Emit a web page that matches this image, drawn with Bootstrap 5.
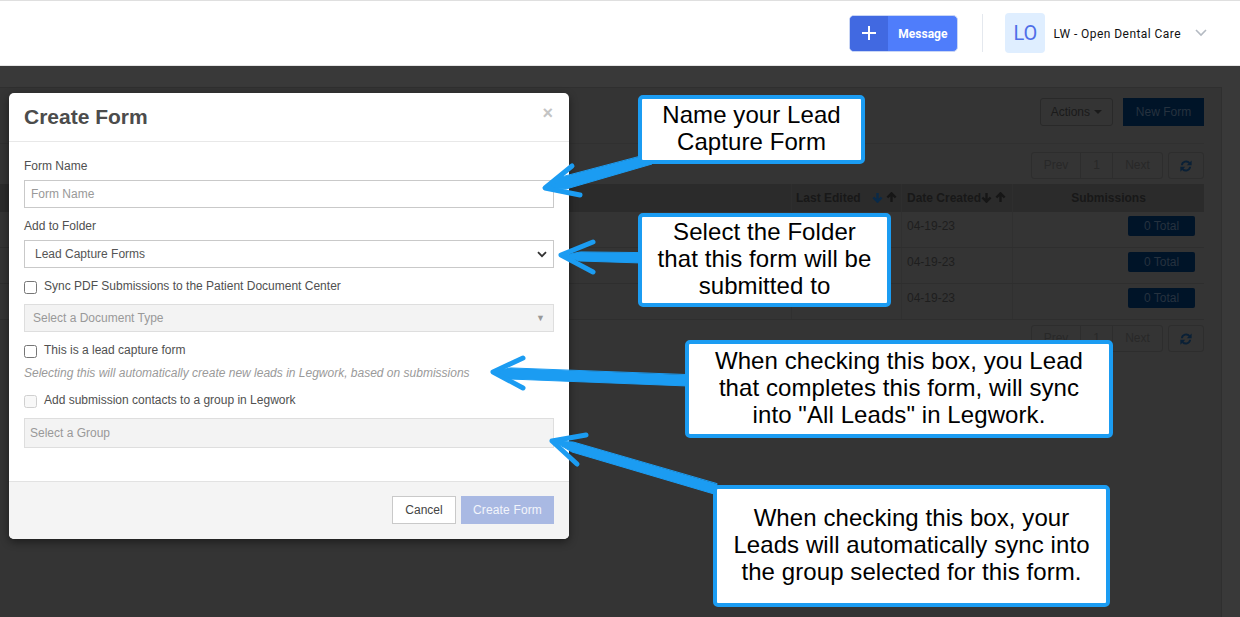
<!DOCTYPE html>
<html lang="en">
<head>
<meta charset="UTF-8">
<title>Create Form</title>
<link rel="stylesheet" href="https://cdn.jsdelivr.net/npm/bootstrap@5.3.2/dist/css/bootstrap.min.css">
<style>
html, body { height: 617px; overflow: hidden; }
body { background: #393939; font-family: "Liberation Sans", Arial, sans-serif; color: #444; position: relative; }
.topbar { height: 66px; background: #fff; border-top: 1px solid #dfdfdf; border-bottom: 1px solid #e6e6e6; padding-right: 33px; }
.msg-btn { height: 37px; width: 109px; margin-right: 24px; border-radius: 5px; overflow: hidden; background: #4f7dfb; border: 1px solid #c9d6f5; color: #fff; font: 700 12px Roboto, sans-serif; }
.msg-plus { width: 38px; background: #4169e1; }
.msg-label { flex: 1; padding-top: 1px; }
.topbar-sep { width: 1px; height: 38px; background: #e4e8ee; margin-right: 22px; }
.avatar { width: 40px; height: 40px; border-radius: 4px; background: #dfeeff; color: #4f6fe8; font: 400 20px Roboto, sans-serif; margin-right: 8px; }
.acct { font: 400 12px Roboto, sans-serif; color: #111; letter-spacing: .44px; margin-right: 14px; padding-top: 1px; }

.backdrop-page { padding: 21px 18px 0 0; height: 551px; }
.bg-panel { height: 530px; background: #343434; border: 1px solid #2f2f2f; border-left: 0; border-bottom: 0; padding: 10px 17px 0 0; font-size: 12px; color: #1e1e1e; }
.bg-head { height: 46px; border-bottom: 1px solid #303030; }
.bg-btn { height: 28px; border: 1px solid #292929; border-radius: 3px; padding: 0 10px; color: #1a1a1a; font-size: 12px; }
.bg-caret { width: 0; height: 0; margin-left: 4px; border-left: 4px solid transparent; border-right: 4px solid transparent; border-top: 4px solid #1a1a1a; }
.bg-navy-btn { height: 28px; width: 81px; margin-left: 10px; background: #001428; color: #26323f; font-size: 12px; }
.pager-row { height: 27px; margin: 8px 0 5px; }
.pager-low { margin-top: 5px; }
.bg-pager { height: 27px; border: 1px solid #2d2d2d; border-radius: 3px; color: #282828; margin-right: 5px; }
.bg-pager > span { line-height: 25px; border-left: 1px solid #2d2d2d; text-align: center; }
.bg-pager > span:first-child { border-left: 0; }
.pg-prev { width: 48px; }
.pg-one { width: 32px; }
.pg-next { width: 50px; }
.bg-refresh { width: 36px; height: 27px; border: 1px solid #2d2d2d; border-radius: 3px; }
.bg-thead { height: 28px; background: #2b2b2b; font-weight: 700; color: #181818; line-height: 28px; }
.bg-row { height: 36px; border-bottom: 1px solid #2e2e2e; }
.col-edited { width: 110px; margin-left: auto; padding-left: 4px; border-left: 1px solid #2e2e2e; }
.col-created { width: 111px; padding-left: 5px; border-left: 1px solid #2e2e2e; }
.col-subs { width: 192px; border-left: 1px solid #2e2e2e; }
.bg-row .col-edited, .bg-row .col-created, .bg-row .col-subs { border-left-color: #303030; }
.bg-row .col-created { padding-top: 5px; }
.total-pill { width: 67px; height: 20px; margin: 4px 9px 0 auto; background: #001428; border-radius: 2px; color: #26323f; text-align: center; line-height: 20px; }
.sort-ico { vertical-align: -1px; }

.modal-box { position: absolute; left: 9px; top: 93px; width: 560px; height: 446px; background: #fff; border-radius: 5px; box-shadow: 0 3px 8px rgba(0,0,0,.45); overflow: hidden; font-size: 12px; }
.modal-top { height: 49px; border-bottom: 1px solid #e8e8e8; padding: 0 15px; }
.modal-top h2 { font: 700 21px "Liberation Sans", Arial, sans-serif; color: #4c4c4c; margin: 0; }
.modal-x { color: #c4c4c4; font-size: 18px; font-weight: 700; line-height: 1; margin-bottom: 8px; margin-right: 1px; }
.modal-main { padding: 17px 15px 0; height: 339px; }
.fld-label { display: block; line-height: 14px; color: #505050; margin-bottom: 7px; }
.fld-box { height: 28px; border: 1px solid #c9c9c9; margin-bottom: 11px; padding: 0 6px; line-height: 26px; color: #999; }
.fld-select { padding: 0 6px 0 10px; color: #555; }
.fld-off { background: #f3f3f3; border-color: #dedede; color: #999; }
.fld-doc { padding: 0 8px; margin-bottom: 11px; }
.fld-group { height: 30px; line-height: 28px; padding: 0 5px; }
.doc-caret { font-size: 9px; }
.chk-row { line-height: 14px; color: #505050; gap: 7px; margin-bottom: 10px; }
.chk-tight { margin-bottom: 8px; }
.chk-last { margin-top: 13px; margin-bottom: 10px; }
.fake-chk { width: 13px; height: 13px; border: 1px solid #767676; border-radius: 2.5px; background: #fff; margin-top: 2px; flex: none; }
.fake-chk-off { border-color: #d0d0d0; background: #f8f8f8; }
.hint { font-style: italic; color: #9a9a9a; line-height: 14px; }
.modal-bottom { height: 58px; background: #f4f4f4; border-top: 1px solid #e2e2e2; padding: 0 15px 1px; gap: 5px; }
.foot-cancel { width: 64px; height: 28px; background: #fff; border: 1px solid #c9c9c9; color: #444; line-height: 26px; text-align: center; }
.foot-create { width: 93px; height: 28px; background: #a9b9e3; color: #f3f5fb; line-height: 28px; letter-spacing: .15px; text-align: center; }

.note { position: absolute; background: #fff; border: 4px solid #1b9cf2; border-radius: 5px; color: #000; font-size: 24px; line-height: 27px; letter-spacing: .08px; text-align: center; display: flex; align-items: center; justify-content: center; padding-bottom: 4px; }
.arrows { position: absolute; left: 0; top: 0; }
</style>
</head>
<body>
<div class="topbar d-flex align-items-center justify-content-end">
  <div class="msg-btn d-flex">
    <div class="msg-plus d-flex align-items-center justify-content-center">
      <svg width="16" height="16" viewBox="0 0 16 16"><path d="M8 1v14M1 8h14" stroke="#fff" stroke-width="2"/></svg>
    </div>
    <div class="msg-label d-flex align-items-center justify-content-center">Message</div>
  </div>
  <div class="topbar-sep"></div>
  <div class="avatar d-flex align-items-center justify-content-center">LO</div>
  <div class="acct">LW - Open Dental Care</div>
  <svg width="12" height="8" viewBox="0 0 12 8"><path d="M1 1l5 5 5-5" fill="none" stroke="#b4bac2" stroke-width="1.6"/></svg>
</div>

<!-- page behind the dialog -->
<div class="backdrop-page">
  <div class="bg-panel">
    <div class="bg-head d-flex justify-content-end align-items-start">
      <div class="bg-btn d-flex align-items-center">Actions<span class="bg-caret"></span></div>
      <div class="bg-navy-btn d-flex align-items-center justify-content-center">New Form</div>
    </div>
    <div class="pager-row d-flex justify-content-end">
      <div class="bg-pager d-flex"><span class="pg-prev">Prev</span><span class="pg-one">1</span><span class="pg-next">Next</span></div>
      <div class="bg-refresh d-flex align-items-center justify-content-center">
        <svg width="12" height="12" viewBox="0 0 16 16" fill="#0a2036"><path d="M2.5 7A5.7 5.7 0 0 1 12.5 4" fill="none" stroke="#0a2036" stroke-width="2.6"/><path d="M15.5 .5v6.5H9zM.5 15.5V9H7z"/><path d="M13.5 9A5.7 5.7 0 0 1 3.5 12" fill="none" stroke="#0a2036" stroke-width="2.6"/></svg>
      </div>
    </div>
    <div class="bg-table">
      <div class="bg-thead d-flex">
        <div class="col-edited">Last Edited
          <svg class="sort-ico ms-2" width="11" height="11" viewBox="0 0 12 12" fill="none" stroke="#0a2a48" stroke-width="2.6"><path d="M6 1v9M1.5 6L6 10.5 10.5 6"/></svg>
          <svg class="sort-ico" width="11" height="11" viewBox="0 0 12 12" fill="none" stroke="#161616" stroke-width="2.6"><path d="M6 11V2M1.5 6L6 1.5 10.5 6"/></svg>
        </div>
        <div class="col-created">Date Created<svg class="sort-ico" width="11" height="11" viewBox="0 0 12 12" fill="none" stroke="#161616" stroke-width="2.6"><path d="M6 1v9M1.5 6L6 10.5 10.5 6"/></svg>
          <svg class="sort-ico" width="11" height="11" viewBox="0 0 12 12" fill="none" stroke="#161616" stroke-width="2.6"><path d="M6 11V2M1.5 6L6 1.5 10.5 6"/></svg>
        </div>
        <div class="col-subs text-center">Submissions</div>
      </div>
      <div class="bg-row d-flex"><div class="col-edited"></div><div class="col-created">04-19-23</div><div class="col-subs"><div class="total-pill">0 Total</div></div></div>
      <div class="bg-row d-flex"><div class="col-edited"></div><div class="col-created">04-19-23</div><div class="col-subs"><div class="total-pill">0 Total</div></div></div>
      <div class="bg-row d-flex"><div class="col-edited"></div><div class="col-created">04-19-23</div><div class="col-subs"><div class="total-pill">0 Total</div></div></div>
    </div>
    <div class="pager-row pager-low d-flex justify-content-end">
      <div class="bg-pager d-flex"><span class="pg-prev">Prev</span><span class="pg-one">1</span><span class="pg-next">Next</span></div>
      <div class="bg-refresh d-flex align-items-center justify-content-center">
        <svg width="12" height="12" viewBox="0 0 16 16" fill="#0a2036"><path d="M2.5 7A5.7 5.7 0 0 1 12.5 4" fill="none" stroke="#0a2036" stroke-width="2.6"/><path d="M15.5 .5v6.5H9zM.5 15.5V9H7z"/><path d="M13.5 9A5.7 5.7 0 0 1 3.5 12" fill="none" stroke="#0a2036" stroke-width="2.6"/></svg>
      </div>
    </div>
  </div>
</div>

<div class="modal-box">
  <div class="modal-top d-flex align-items-center justify-content-between">
    <h2>Create Form</h2>
    <div class="modal-x">×</div>
  </div>
  <div class="modal-main">
    <label class="fld-label">Form Name</label>
    <div class="fld-box">Form Name</div>
    <label class="fld-label">Add to Folder</label>
    <div class="fld-box fld-select d-flex justify-content-between align-items-center">
      <span>Lead Capture Forms</span>
      <svg width="10" height="7" viewBox="0 0 10 7"><path d="M1 1.2l4 4 4-4" fill="none" stroke="#333" stroke-width="1.8"/></svg>
    </div>
    <div class="chk-row d-flex"><span class="fake-chk"></span><span>Sync PDF Submissions to the Patient Document Center</span></div>
    <div class="fld-box fld-off fld-doc d-flex justify-content-between align-items-center"><span>Select a Document Type</span><span class="doc-caret">▼</span></div>
    <div class="chk-row chk-tight d-flex"><span class="fake-chk"></span><span>This is a lead capture form</span></div>
    <div class="hint">Selecting this will automatically create new leads in Legwork, based on submissions</div>
    <div class="chk-row chk-last d-flex"><span class="fake-chk fake-chk-off"></span><span>Add submission contacts to a group in Legwork</span></div>
    <div class="fld-box fld-off fld-group">Select a Group</div>
  </div>
  <div class="modal-bottom d-flex align-items-center justify-content-end">
    <div class="foot-cancel">Cancel</div>
    <div class="foot-create">Create Form</div>
  </div>
</div>

<svg class="arrows" width="1240" height="617" viewBox="0 0 1240 617" fill="#1b9cf2" stroke="#1b9cf2" stroke-linecap="round" stroke-linejoin="round">
  <path d="M642 156L652 164L566 189L545 188L558 178Z" stroke-width="1"/>
  <path d="M572 166L545 188L580 195" stroke-width="5" fill="none"/>
  <path d="M642 253L642 263L580 261L561 256L580 252Z" stroke-width="1"/>
  <path d="M593 242L561 255L593 272" stroke-width="5" fill="none"/>
  <path d="M688 375L688 386L510 379L493 372L510 368Z" stroke-width="1"/>
  <path d="M523 358L493 372L523 388" stroke-width="5" fill="none"/>
  <path d="M717 484L714 494L572 452L553 441L573 442Z" stroke-width="1"/>
  <path d="M586 435L552 441L577 464" stroke-width="5" fill="none"/>
</svg>

<div class="note" style="left:638px;top:95px;width:227px;height:69px">Name your Lead<br>Capture Form</div>
<div class="note" style="left:638px;top:213px;width:253px;height:94px">Select the Folder<br>that this form will be<br>submitted to</div>
<div class="note" style="left:685px;top:340px;width:428px;height:98px">When checking this box, you Lead<br>that completes this form, will sync<br>into "All Leads" in Legwork.</div>
<div class="note" style="left:713px;top:485px;width:397px;height:122px">When checking this box, your<br>Leads will automatically sync into<br>the group selected for this form.</div>
</body>
</html>
